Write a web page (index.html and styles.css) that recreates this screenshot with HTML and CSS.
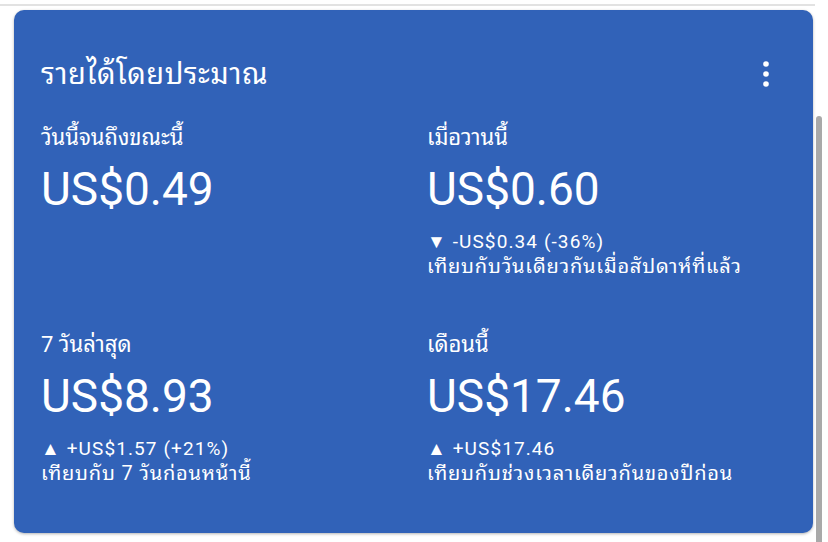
FILE: index.html
```html
<!DOCTYPE html>
<html lang="th">
<head>
  <meta charset="UTF-8">
  <meta name="viewport" content="width=device-width, initial-scale=1.0">
  <title>รายได้โดยประมาณ</title>
  <link rel="stylesheet" href="styles.css">
</head>
<body>
  <div class="page">
    <div class="top-rule"></div>

    <!-- Earnings card -->
    <div class="card">
      <div class="card-header">
        <span class="card-title">รายได้โดยประมาณ</span>
        <svg class="more-icon" width="8" height="28" viewBox="0 0 8 28">
          <circle cx="4" cy="4" r="2.8" fill="#fff"/>
          <circle cx="4" cy="14" r="2.8" fill="#fff"/>
          <circle cx="4" cy="24" r="2.8" fill="#fff"/>
        </svg>
      </div>

      <div class="stats">
        <div class="stat">
          <div class="stat-label">วันนี้จนถึงขณะนี้</div>
          <div class="stat-value">US$0.49</div>
        </div>
        <div class="stat">
          <div class="stat-label">เมื่อวานนี้</div>
          <div class="stat-value">US$0.60</div>
          <div class="stat-change">▼ -US$0.34 (-36%)</div>
          <div class="stat-compare">เทียบกับวันเดียวกันเมื่อสัปดาห์ที่แล้ว</div>
        </div>
        <div class="stat">
          <div class="stat-label">7 วันล่าสุด</div>
          <div class="stat-value">US$8.93</div>
          <div class="stat-change">▲ +US$1.57 (+21%)</div>
          <div class="stat-compare">เทียบกับ 7 วันก่อนหน้านี้</div>
        </div>
        <div class="stat">
          <div class="stat-label">เดือนนี้</div>
          <div class="stat-value">US$17.46</div>
          <div class="stat-change">▲ +US$17.46</div>
          <div class="stat-compare">เทียบกับช่วงเวลาเดียวกันของปีก่อน</div>
        </div>
      </div>
    </div>
  </div>

  <!-- Scrollbar -->
  <div class="scrollbar"></div>
</body>
</html>
```

FILE: styles.css
```css
/* General Styles */
body {
  font-family: Roboto, "Noto Sans Thai Looped", "Noto Sans Thai", sans-serif;
  margin: 0;
  padding: 0;
  background-color: #ffffff;
  display: flex;
  overflow: hidden;
  height: 542px;
}

.page {
  width: 815px;
}

.top-rule {
  height: 2px;
  margin-top: 4px;
  background-color: #e2e2e2;
}

/* Card */
.card {
  margin: 4px 0 0 14px;
  width: 799px;
  height: 523px;
  box-sizing: border-box;
  padding: 48px 28px 0 27px;
  background-color: #3162b8;
  border-radius: 10px;
  box-shadow: 0 1px 3px rgba(0, 0, 0, 0.3);
  color: #ffffff;
}

.card-header {
  display: flex;
  justify-content: space-between;
  align-items: center;
  height: 32px;
}

.card-title {
  font-size: 29px;
  line-height: 32px;
  letter-spacing: 0.5px;
}

.more-icon {
  margin-right: 15px;
}

/* Stats grid */
.stats {
  display: grid;
  grid-template-columns: 386px 1fr;
  row-gap: 52px;
  margin-top: 34px;
}

.stat-label {
  font-size: 22px;
  line-height: 28px;
}

.stat-value {
  font-size: 46px;
  line-height: 56px;
  margin-top: 9px;
}

.stat-change {
  font-size: 19px;
  line-height: 25px;
  margin-top: 12px;
  letter-spacing: 1.1px;
}

.stat-compare {
  font-size: 20px;
  line-height: 25px;
  letter-spacing: 0.8px;
}

/* Scrollbar */
.scrollbar {
  width: 6px;
  margin: 116px 0 0 1px;
  background-color: #a9a9a9;
  border-radius: 3px 3px 0 0;
}
```
